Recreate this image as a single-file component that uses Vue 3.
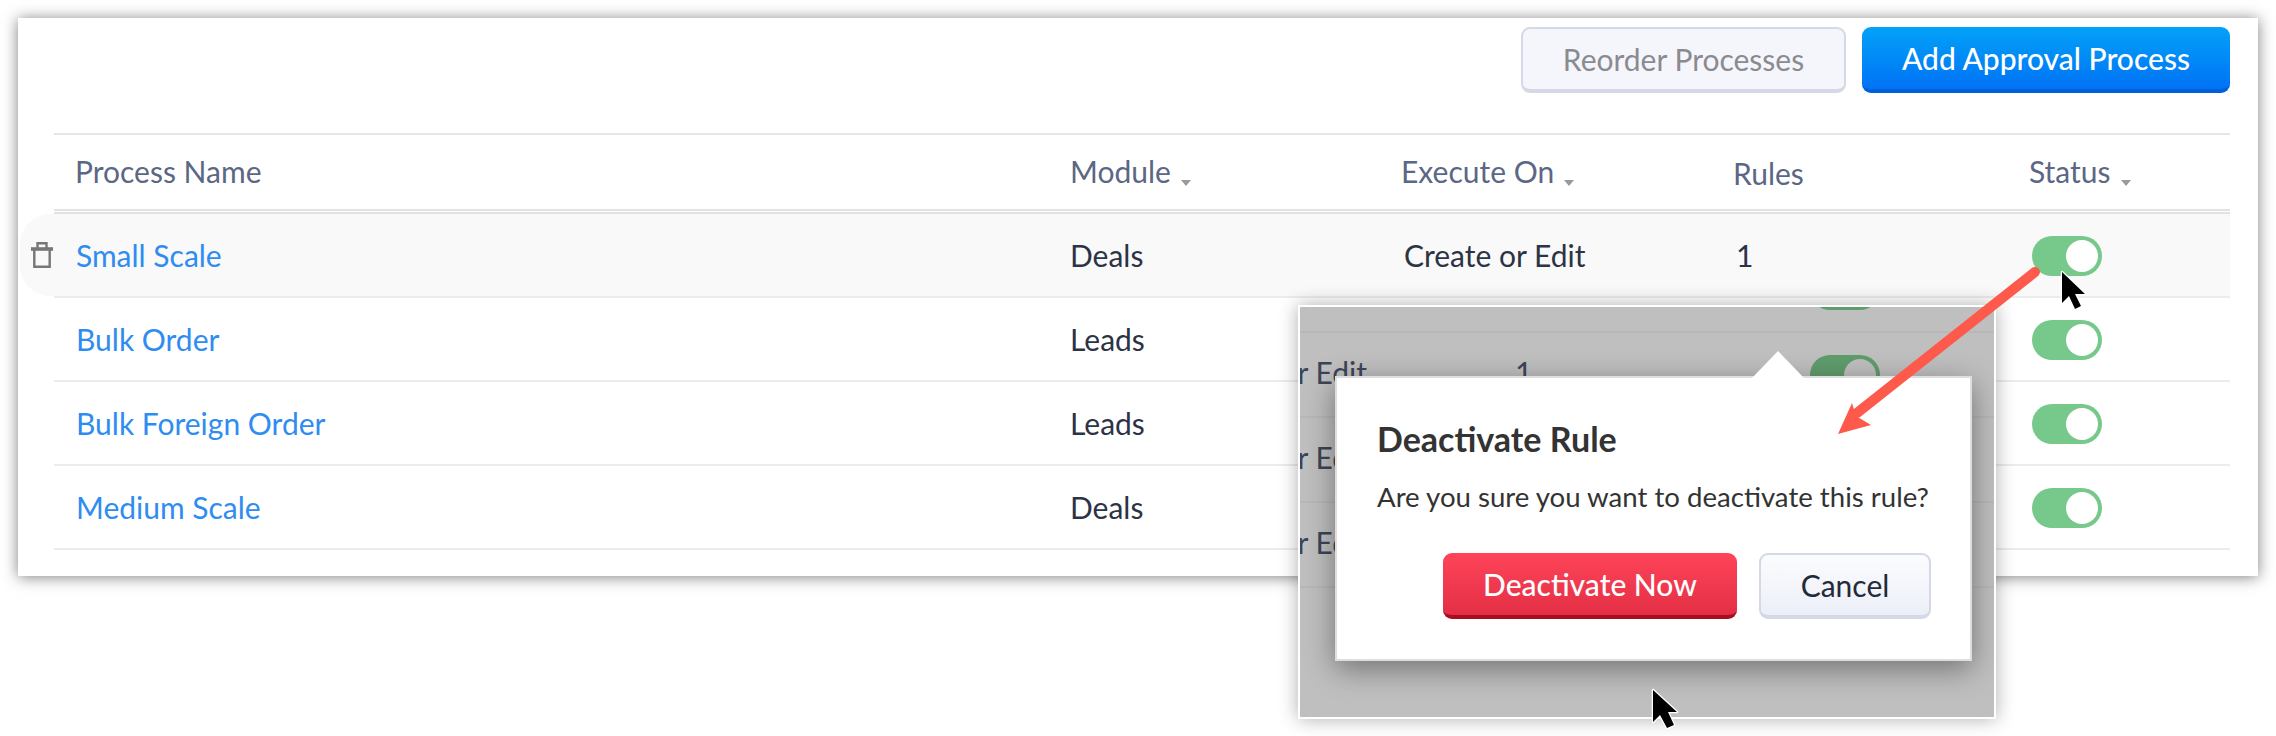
<script setup>
const rows = [
  { name: "Small Scale", module: "Deals", on: "Create or Edit", rules: 1 },
  { name: "Bulk Order", module: "Leads", on: "Create or Edit", rules: 1 },
  { name: "Bulk Foreign Order", module: "Leads", on: "Create or Edit", rules: 1 },
  { name: "Medium Scale", module: "Deals", on: "Create or Edit", rules: 1 },
];
const heads = [
  { label: "Process Name" },
  { label: "Module", sort: true },
  { label: "Execute On", sort: true },
  { label: "Rules", low: true },
  { label: "Status", sort: true },
];
</script>

<template>
  <div class="page">
    <div class="card">
      <div class="toolbar">
        <button class="btn btn-reorder">Reorder Processes</button>
        <button class="btn btn-add">Add Approval Process</button>
      </div>
      <div class="table">
        <div class="head cols">
          <div v-for="h in heads" :key="h.label" class="head-cell" :class="{ low: h.low }">
            {{ h.label }}<span v-if="h.sort" class="caret" />
          </div>
        </div>
        <div v-for="(r, i) in rows" :key="r.name" class="row">
          <div class="row-in cols" :class="{ hover: i === 0 }">
            <svg v-if="i === 0" class="trash" viewBox="0 0 22 26" width="22" height="26">
              <path d="M6.500 6V1.200H15.500V6M3.300 8V24.800H18.700V8" fill="none" stroke="#777" stroke-width="2.400" />
              <path d="M0 7H22" fill="none" stroke="#777" stroke-width="3.600" />
            </svg>
            <a class="link">{{ r.name }}</a>
            <span class="mod">{{ r.module }}</span>
            <span class="on">{{ r.on }}</span>
            <span class="num">{{ r.rules }}</span>
            <span class="toggle"><i /></span>
          </div>
        </div>
      </div>
    </div>

    <div class="shot">
      <div class="ghost">
        <div v-for="n in 4" :key="n" class="ghost-row">
          <div class="ghost-text"><span>Create or Edit</span></div>
          <span class="ghost-num">1</span>
          <span class="toggle dark"><i /></span>
        </div>
      </div>
      <div class="dialog">
        <div class="nub" />
        <h3>Deactivate Rule</h3>
        <p>Are you sure you want to deactivate this rule?</p>
        <div class="actions">
          <button class="btn btn-red">Deactivate Now</button>
          <button class="btn btn-cancel">Cancel</button>
        </div>
      </div>
    </div>

    <svg class="overlay" width="2276" height="736" viewBox="0 0 2276 736">
      <path d="M2035 272L1857 413" fill="none" stroke="#fd5a4c" stroke-width="10" stroke-linecap="round" />
      <path d="M1838 434L1852 403L1856 416L1871 425Z" fill="#fd5a4c" />
      <path d="M2062 272V303L2069 296L2075 309L2081 306L2075 294H2085Z" fill="#000" stroke="#fff" stroke-width="2.500" stroke-linejoin="round" paint-order="stroke" />
      <path d="M1653 690V722L1660 715L1667 728L1674 725L1668 712H1677Z" fill="#000" stroke="#fff" stroke-width="2.500" stroke-linejoin="round" paint-order="stroke" />
    </svg>
  </div>
</template>

<style>
body {
  background: #fff;
}
</style>

<style scoped>
.page {
  position: relative;
  width: 2276px;
  height: 736px;
  overflow: hidden;
  font-family: Lato, sans-serif;
  font-size: 30px;
  color: #2c3345;
  background: #fff;
}

.card {
  margin: 18px 0 0 18px;
  width: 2240px;
  height: 558px;
  box-sizing: border-box;
  padding: 9px 28px 0 36px;
  background: #fff;
  box-shadow: 0 1px 14px rgba(0, 0, 0, 0.5);
}

.toolbar {
  display: flex;
  justify-content: flex-end;
  gap: 16px;
  height: 106px;
}

.btn {
  height: 66px;
  box-sizing: border-box;
  border-radius: 9px;
  font-family: inherit;
  font-size: 30px;
  padding: 0;
}

.btn-reorder {
  width: 325px;
  background: #f5f6fb;
  border: 2px solid #d5d8e6;
  border-bottom-width: 4px;
  color: #8a8b90;
}

.btn-add {
  width: 368px;
  background: linear-gradient(#03a2f7, #0072f6);
  border: 0;
  border-bottom: 4px solid #0060d8;
  color: #fff;
  font-weight: 500;
}

.table {
  border-top: 2px solid #e6e6e6;
}

.cols {
  display: grid;
  grid-template-columns: 995px 331px 332px 296px 1fr;
  align-items: center;
  padding-left: 21px;
}

.head {
  height: 79px;
  box-sizing: border-box;
  padding-bottom: 2px;
  border-bottom: 5px double #e2e2e2;
  color: #5b6784;
}

.head-cell.low {
  padding-top: 3px;
}

.caret {
  display: inline-block;
  margin-left: 10px;
  vertical-align: -3px;
  border: 5px solid transparent;
  border-top: 6px solid #9a9a9a;
  border-bottom: 0;
}

.row {
  height: 84px;
  box-sizing: border-box;
  border-bottom: 2px solid #ececec;
}

.row-in {
  position: relative;
  height: 82px;
}

.row-in.hover {
  margin-left: -34px;
  padding-left: 55px;
  background: #f9f9fa;
  border-radius: 30px 0 0 30px;
}

.trash {
  position: absolute;
  left: 11px;
  top: 28px;
}

.link {
  padding-left: 1px;
  color: #2f8cf0;
}

.on {
  padding-left: 3px;
}

.num {
  padding-left: 3px;
}

.toggle {
  display: block;
  position: relative;
  width: 70px;
  height: 40px;
  margin: 2px 0 0 3px;
  border-radius: 20px;
  background: #76c98a;
}

.toggle i {
  position: absolute;
  right: 4px;
  top: 4px;
  width: 32px;
  height: 32px;
  border-radius: 50%;
  background: #fff;
}

.shot {
  position: absolute;
  left: 1298px;
  top: 305px;
  width: 698px;
  height: 414px;
  box-sizing: border-box;
  border: 2px solid #fff;
  background: #bfbfbf;
  box-shadow: 0 0 18px rgba(0, 0, 0, 0.32);
  overflow: hidden;
}

.ghost {
  margin-top: -59px;
}

.ghost-row {
  display: flex;
  align-items: center;
  height: 83px;
  border-bottom: 2px solid #b8b8b8;
  color: #3c4558;
}

.ghost-text {
  display: flex;
  justify-content: flex-end;
  width: 67px;
  overflow: hidden;
  white-space: nowrap;
  margin-top: -5px;
}

.ghost-text span {
  flex: none;
}

.ghost-num {
  margin-left: 148px;
  width: 295px;
  margin-top: -5px;
}

.toggle.dark {
  margin: 0;
  background: #5f9d6d;
}

.toggle.dark i {
  background: #bfbfbf;
}

.dialog {
  position: absolute;
  left: 35px;
  top: 69px;
  width: 637px;
  height: 285px;
  box-sizing: border-box;
  padding: 41px 39px 0 40px;
  background: #fff;
  border: 2px solid #dedede;
  box-shadow: 0 8px 28px rgba(0, 0, 0, 0.4);
  color: #333;
}

.nub {
  position: absolute;
  left: 415px;
  top: -27px;
  width: 52px;
  height: 27px;
  background: #fff;
  clip-path: polygon(50% 0, 100% 100%, 0 100%);
}

.dialog h3 {
  margin: 0;
  font-size: 34px;
  line-height: 40px;
  font-weight: 700;
}

.dialog p {
  margin: 20px 0 0;
  font-size: 27.600px;
  line-height: 36px;
  white-space: nowrap;
}

.actions {
  display: flex;
  justify-content: flex-end;
  gap: 22px;
  margin-top: 38px;
}

.btn-red {
  width: 294px;
  background: linear-gradient(#fe4459, #e32f45);
  border: 0;
  border-bottom: 4px solid #a80d20;
  color: #fff;
  font-weight: 500;
}

.btn-cancel {
  width: 172px;
  background: linear-gradient(#fbfcfe, #eceff8);
  border: 2px solid #d5d8e6;
  border-bottom-width: 4px;
  color: #232a38;
}

.overlay {
  position: absolute;
  left: 0;
  top: 0;
  pointer-events: none;
}
</style>
